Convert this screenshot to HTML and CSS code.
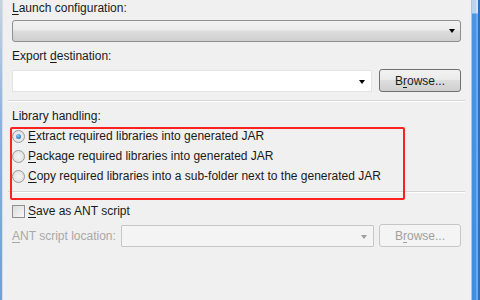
FILE: index.html
```html
<!DOCTYPE html>
<html>
<head>
<meta charset="utf-8">
<link rel="stylesheet" href="styles.css">
</head>
<body>
<div class="window">
  <div class="frame-left"></div>
  <div class="content">
    <div class="label"><u>L</u>aunch configuration:</div>
    <div class="combo readonly">
      <span class="arrow"></span>
    </div>
    <div class="label label2"><span>Export <u>d</u>estination:</span></div>
    <div class="row">
      <div class="combo edit"><span class="arrow"></span></div>
      <button class="btn">B<u>r</u>owse...</button>
    </div>
    <div class="sep"></div>
    <div class="label group">Library handling:</div>
    <div class="options">
      <div class="option"><span class="radio checked"></span><span><u>E</u>xtract required libraries into generated JAR</span></div>
      <div class="option"><span class="radio"></span><span><u>P</u>ackage required libraries into generated JAR</span></div>
      <div class="option"><span class="radio"></span><span><u>C</u>opy required libraries into a sub-folder next to the generated JAR</span></div>
      <div class="sep sep2"></div>
      <div class="highlight"></div>
    </div>
    <div class="option check-row"><span class="check"></span><span><u>S</u>ave as ANT script</span></div>
    <div class="row ant-row">
      <span class="dis-label"><u>A</u>NT script location:</span>
      <div class="combo edit disabled"><span class="arrow"></span></div>
      <button class="btn disabled">B<u>r</u>owse...</button>
    </div>
  </div>
  <div class="frame-right">
    <div class="fr1"></div><div class="fr2"></div><div class="fr3"></div><div class="fr4"></div>
  </div>
</div>
</body>
</html>
```
FILE: styles.css
```css
html, body {
  margin: 0;
  padding: 0;
}
body {
  width: 480px;
  height: 300px;
  overflow: hidden;
  background: #f0f0f0;
  font-family: "Liberation Sans", Arial, sans-serif;
  font-size: 12px;
  color: #1a1a1a;
}
u { text-decoration: underline; text-underline-offset: 2px; }
.window {
  display: flex;
  height: 300px;
}
.frame-left {
  width: 2px;
  background: linear-gradient(#c9d3de, #8fb3dc 40%, #6aa0dc);
  border-right: 1px solid #d6dde6;
}
.content {
  flex: 1;
  padding: 0 10px 0 9px;
  display: flex;
  flex-direction: column;
}
.frame-right {
  width: 9px;
  display: flex;
}
.fr1 { width: 1px; background: #b4c2d2; }
.fr2 { width: 4px; background: linear-gradient(#b9d4f1 0, #b9d4f1 13px, #4a94e4 14px, #3f8ee2); }
.fr3 { width: 2px; background: linear-gradient(#d0e2f6 0, #d0e2f6 13px, #6aaaf0 14px); }
.fr4 { width: 2px; background: #2a6fc0; }
.label {
  height: 15px;
  line-height: 15px;
  margin-top: 1px;
}
.combo {
  position: relative;
  height: 20px;
  border: 1px solid #8e8f8f;
  border-radius: 3px;
  margin-top: 4px;
}
.combo.readonly {
  background: linear-gradient(#f2f2f2 0, #ebebeb 45%, #dddddd 50%, #cfcfcf 100%);
}
.arrow {
  position: absolute;
  right: 5px;
  top: 8px;
  width: 0;
  height: 0;
  border-left: 3.5px solid transparent;
  border-right: 3.5px solid transparent;
  border-top: 4px solid #000;
}
.label2 { margin-top: 7px; }
.label + .row { margin-top: 5px; }
.row {
  display: flex;
  align-items: center;
  gap: 7px;
}
.combo.edit {
  flex: 1;
  margin-top: 0;
  background: #fff;
  border-color: #e3e3e3;
  border-radius: 1px;
  height: 20px;
}
.combo.edit .arrow { right: 6px; top: 9px; }
.btn {
  width: 82px;
  height: 23px;
  border: 1px solid #707070;
  border-radius: 3px;
  background: linear-gradient(#f2f2f2 0, #ebebeb 45%, #dddddd 50%, #cfcfcf 100%);
  font: inherit;
  color: #1a1a1a;
  padding: 0;
}
.sep {
  height: 1px;
  background: #d5d5d5;
  border-bottom: 1px solid #fff;
  margin: 8px -4px 0 -4px;
}
.label.group { margin-top: 7px; }
.options {
  position: relative;
  margin-top: 2px;
}
.option {
  display: flex;
  align-items: center;
  height: 20px;
  gap: 3px;
}
.radio {
  width: 11px;
  height: 11px;
  border-radius: 50%;
  border: 1px solid #9a9a9a;
  background: radial-gradient(circle at 50% 50%, #f4f4f4 0, #dcdcdc 100%);
  position: relative;
  flex: none;
}
.radio.checked::after {
  content: "";
  position: absolute;
  left: 3px; top: 3px;
  width: 5px; height: 5px;
  border-radius: 50%;
  background: radial-gradient(circle at 40% 35%, #8fd0ff 0, #1e6fb8 80%);
}
.sep2 { margin-top: 5px; }
.highlight {
  position: absolute;
  left: -2px;
  top: 1px;
  width: 395px;
  height: 73px;
  box-sizing: border-box;
  border: 2px solid #ff2020;
  border-radius: 2px;
}
.check-row { margin-top: 8px; height: 20px; }
.check {
  width: 11px;
  height: 11px;
  border: 1px solid #8e8f8f;
  background: linear-gradient(135deg, #dcdcdc, #f8f8f8);
  flex: none;
}
.ant-row { margin-top: 3px; gap: 5px; }
.dis-label { color: #a8a8a8; }
.combo.disabled {
  background: #f4f4f4;
  border-color: #c6c6c6;
  height: 20px;
}
.combo.disabled .arrow { border-top-color: #a0a0a0; }
.btn.disabled {
  color: #a0a0a0;
  border-color: #c6c6c6;
  background: #f4f4f4;
}
```
